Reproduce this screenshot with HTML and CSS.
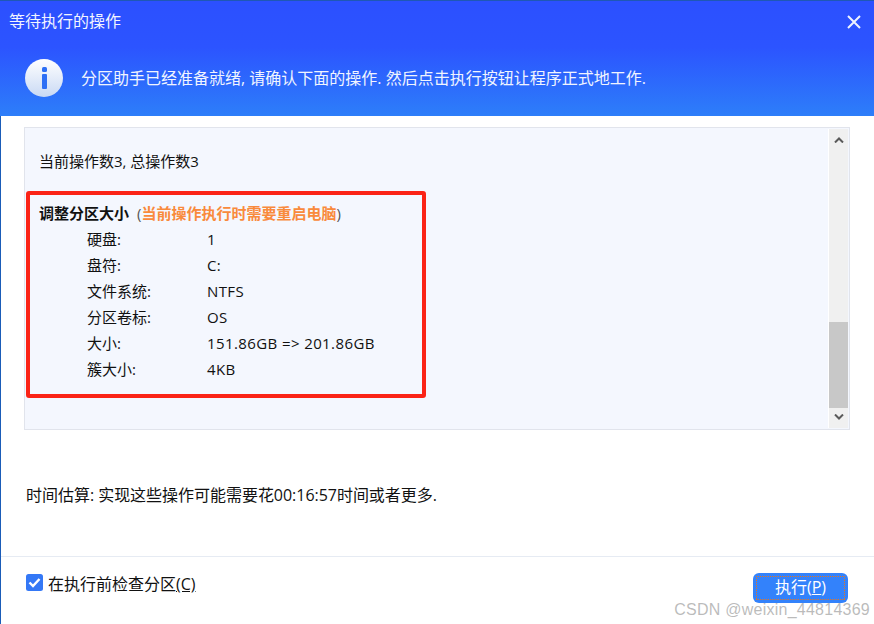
FILE: index.html
```html
<!DOCTYPE html>
<html lang="zh">
<head>
<meta charset="utf-8">
<title>等待执行的操作</title>
<link rel="stylesheet" href="styles.css">
</head>
<body>
<div class="window">
  <header class="head">
    <div class="titlebar">
      <span class="title">等待执行的操作</span>
      <svg class="close" width="14" height="14" viewBox="0 0 14 14"><path d="M1 1L13 13M13 1L1 13" stroke="#eef3ff" stroke-width="2" fill="none"/></svg>
    </div>
    <div class="notice">
      <svg class="info" width="38" height="38" viewBox="0 0 38 38">
        <defs><linearGradient id="ig" x1="0" y1="0" x2="0" y2="1"><stop offset="0" stop-color="#ffffff"/><stop offset="1" stop-color="#c9d9f4"/></linearGradient></defs>
        <circle cx="19" cy="19" r="19" fill="url(#ig)"/>
        <rect x="17" y="8" width="5" height="5" rx="1.5" fill="#2d6ff5"/>
        <rect x="17" y="15" width="5" height="15" rx="1" fill="#2d6ff5"/>
      </svg>
      <span class="notice-text">分区助手已经准备就绪, 请确认下面的操作. 然后点击执行按钮让程序正式地工作.</span>
    </div>
  </header>
  <section class="listbox">
    <div class="content">
      <p class="count">当前操作数3, 总操作数3</p>
      <div class="redbox">
        <p class="op"><b>调整分区大小</b><span class="warn"><span class="paren">(</span>当前操作执行时需要重启电脑<span class="paren">)</span></span></p>
        <dl class="props">
          <dt>硬盘:</dt><dd>1</dd>
          <dt>盘符:</dt><dd>C:</dd>
          <dt>文件系统:</dt><dd>NTFS</dd>
          <dt>分区卷标:</dt><dd>OS</dd>
          <dt>大小:</dt><dd>151.86GB =&gt; 201.86GB</dd>
          <dt>簇大小:</dt><dd>4KB</dd>
        </dl>
      </div>
    </div>
    <div class="scrollbar">
      <svg class="arrow" width="10" height="6" viewBox="0 0 10 6"><path d="M1 5.5L5 1.5L9 5.5" stroke="#5a5a5a" stroke-width="2" fill="none"/></svg>
      <div class="track"><div class="thumb"></div></div>
      <svg class="arrow" width="10" height="6" viewBox="0 0 10 6"><path d="M1 .5L5 4.5L9 .5" stroke="#5a5a5a" stroke-width="2" fill="none"/></svg>
    </div>
  </section>
  <p class="estimate">时间估算: 实现这些操作可能需要花00:16:57时间或者更多.</p>
  <footer class="foot">
    <label class="check">
      <svg width="17" height="17" viewBox="0 0 17 17"><rect width="17" height="17" rx="2.5" fill="#3478f6"/><path d="M3.5 8.5L7 12L13.5 5" stroke="#fff" stroke-width="2.4" fill="none"/></svg>
      <span>在执行前检查分区<u>(C)</u></span>
    </label>
    <button class="run"><span class="run-in">执行(<u>P</u>)</span></button>
  </footer>
  <div class="mark">CSDN @weixin_44814369</div>
</div>
</body>
</html>
```

FILE: styles.css
```css
* { box-sizing: border-box; }
html, body { margin: 0; padding: 0; }
body {
  width: 874px;
  height: 624px;
  overflow: hidden;
  background: #fff;
  font-family: "Open Sans", "Noto Sans CJK SC", sans-serif;
  font-size: 15px;
  color: #111;
}
p { margin: 0; }
.window {
  position: relative;
  width: 874px;
  height: 624px;
  border-left: 1px solid #1a5cb8;
  display: flex;
  flex-direction: column;
}
.head {
  margin-left: -1px;
  height: 116px;
  border-top: 1px solid #1f58b5;
  background: linear-gradient(180deg, #2c50ff 0%, #2c54ff 40%, #2d7ef9 100%);
  color: #fff;
  display: flex;
  flex-direction: column;
}
.titlebar {
  height: 40px;
  padding: 0 13px 0 9px;
  display: flex;
  justify-content: space-between;
  align-items: center;
}
.title { font-size: 16px; line-height: 40px; color: #f2f5ff; }
.close { margin-top: 2px; }
.notice {
  display: flex;
  align-items: flex-start;
  gap: 18px;
  padding: 18px 0 0 25px;
}
.notice-text { font-size: 16px; line-height: 22px; color: #f0f4ff; margin-top: 8px; }
.listbox {
  margin: 11px 24px 0 23px;
  height: 303px;
  border: 1px solid #e1e4ec;
  background: #f4f7fe;
  display: flex;
}
.content { flex: 1; padding: 22px 0 0 14px; }
.count { line-height: 22px; }
.redbox {
  margin-top: 19px;
  margin-left: -13px;
  width: 400px;
  height: 207px;
  border: 4px solid #fb2316;
  border-radius: 3px;
  padding: 7px 0 0 9px;
}
.op { line-height: 22px; }
.op b { font-weight: 700; margin-right: 8px; }
.warn { color: #f98a3c; font-weight: 600; }
.paren { color: #555; font-weight: 400; }
.props {
  margin: 2px 0 0 48px;
  display: grid;
  grid-template-columns: 120px 1fr;
  grid-auto-rows: 26px;
  line-height: 26px;
}
.props dt, .props dd { margin: 0; }
.props dd { letter-spacing: .4px; }
.scrollbar {
  margin: 1px 1px 1px 0;
  background: #f0f0f0;
  display: flex;
  flex-direction: column;
  align-items: center;
  border-left: 1px solid #fff;
  width: 20px;
}
.arrow { margin: 8px 0; flex: none; }
.track { flex: 1; width: 100%; display: flex; flex-direction: column; justify-content: flex-end; }
.thumb { height: 86px; background: #c8c8c8; margin-bottom: -2px; }
.estimate { margin: 54px 0 0 25px; line-height: 22px; font-size: 16px; letter-spacing: -.03px; }
.foot {
  margin-top: 50px;
  flex: 1;
  border-top: 1px solid #e6ebf3;
  display: flex;
  justify-content: space-between;
  padding: 16px 26px 0 25px;
}
.check { display: flex; align-items: flex-start; gap: 5px; height: 22px; line-height: 22px; font-size: 16px; }
.check svg { margin-top: 1px; }
.run {
  width: 95px;
  height: 30px;
  border: 0;
  border-radius: 6px;
  background: #3382fb;
  padding: 3px;
  font: inherit;
  font-size: 16px;
  color: #fff;
}
.run-in {
  display: block;
  height: 24px;
  line-height: 23px;
  background:
    repeating-linear-gradient(90deg, #e8751e 0 1px, transparent 1px 2px) top / 100% 1px no-repeat,
    repeating-linear-gradient(90deg, #e8751e 0 1px, transparent 1px 2px) bottom / 100% 1px no-repeat,
    repeating-linear-gradient(180deg, #e8751e 0 1px, transparent 1px 2px) left / 1px 100% no-repeat,
    repeating-linear-gradient(180deg, #e8751e 0 1px, transparent 1px 2px) right / 1px 100% no-repeat;
}
.mark {
  position: absolute;
  right: 4px;
  bottom: 4px;
  font-family: "Liberation Sans", sans-serif;
  font-size: 16px;
  line-height: 20px;
  color: rgba(120,120,120,.5);
  letter-spacing: .25px;
}
```
